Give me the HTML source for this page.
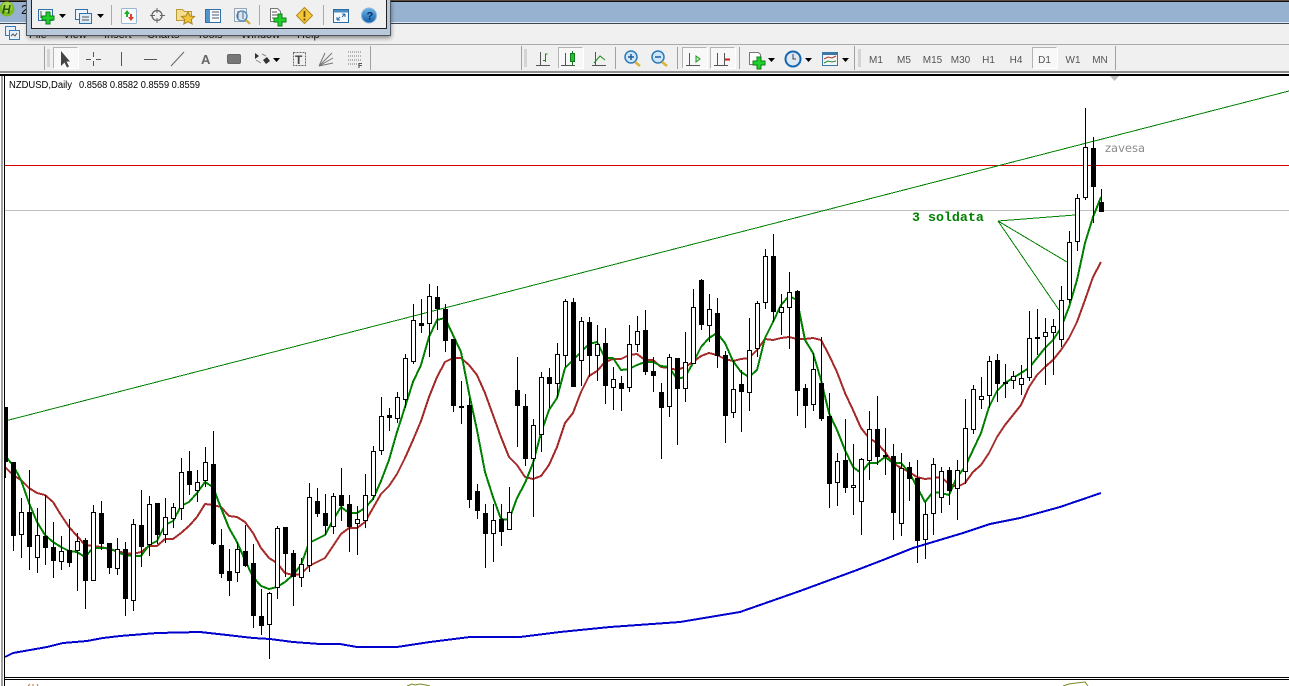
<!DOCTYPE html>
<html><head><meta charset="utf-8"><title>NZDUSD,Daily</title>
<style>
html,body{margin:0;padding:0;background:#fff;width:1289px;height:686px;overflow:hidden}
svg{position:absolute;left:0;top:0;display:block}
text{font-family:"Liberation Sans",sans-serif}
.btn{fill:#f8f8f8;shape-rendering:crispEdges}
.bl{fill:none;stroke:#b4b4b4;shape-rendering:crispEdges}
.br{fill:none;stroke:#fff;shape-rendering:crispEdges}
</style></head><body>
<svg width="1289" height="686" viewBox="0 0 1289 686" xmlns="http://www.w3.org/2000/svg">
<defs>
<clipPath id="ch"><rect x="5" y="76" width="1284" height="601"/></clipPath>
<filter id="sh" x="-5%" y="-20%" width="110%" height="150%"><feGaussianBlur stdDeviation="2.5"/></filter>
<linearGradient id="gb" x1="0" y1="0" x2="0" y2="1"><stop offset="0" stop-color="#6fb6ea"/><stop offset="1" stop-color="#0f5ea8"/></linearGradient>
</defs>

<!-- window chrome -->
<rect width="1289" height="1" fill="#5a4c3e"/><rect y="1" width="1289" height="1" fill="#111"/>
<rect y="2" width="1289" height="20" fill="#96b2d0"/>
<rect y="22" width="1289" height="1" fill="#dfe9f3"/><rect y="23" width="1289" height="1" fill="#3c4650"/>
<rect y="24" width="1289" height="20" fill="#f0f0f0"/>
<rect y="44" width="1289" height="1" fill="#a9a9a9"/>
<rect y="45" width="1289" height="26" fill="#f0f0f0"/>
<rect y="71" width="1289" height="2" fill="#8e8e8e"/><rect y="73" width="1289" height="1" fill="#fff"/>
<rect y="74" width="1289" height="2" fill="#000"/>

<!-- logo -->
<circle cx="7" cy="9" r="7.500" fill="#7cbb24"/><circle cx="7" cy="7" r="5" fill="#a8d84a"/>
<text x="2" y="13.500" font-size="12" font-weight="bold" font-style="italic" fill="#23520a">H</text>
<text x="21" y="14" font-size="13" fill="#111">2</text>

<!-- menu -->
<g stroke="#3a78b8" fill="#e6f0fa"><rect x="5.500" y="26.500" width="10" height="9"/><rect x="9.500" y="30.500" width="10" height="9"/></g>
<path d="M11 36l2-2 2 2 2-3" stroke="#555" fill="none"/>
<g font-size="11" fill="#222">
<text x="29" y="38">File</text><text x="63" y="38">View</text><text x="104" y="38">Insert</text><text x="147" y="38">Charts</text><text x="197" y="38">Tools</text><text x="241" y="38">Window</text><text x="297" y="38">Help</text>
</g>

<!-- line studies toolbar -->
<rect x="44" y="46" width="1" height="24" fill="#a0a0a0"/>
<path d="M47 50h3M47 52h3M47 54h3M47 56h3M47 58h3M47 60h3M47 62h3M47 64h3M47 66h3" stroke="#b8b8b8"/>
<rect class="btn" x="53" y="47" width="25" height="22"/><path class="bl" d="M53.500 68.500V47.500H77.500"/><path class="br" d="M78.500 47.500V68.500H53.500"/>
<path d="M61 51v15l3.500-3.500 2.500 5 2-1-2.500-5H70z" fill="#444"/>
<path d="M93.500 52v5M93.500 61v5M86 59.500h5M96 59.500h5" stroke="#555" fill="none"/>
<path d="M121.500 52v14" stroke="#555"/>
<path d="M144 59.500h13" stroke="#555"/>
<path d="M171 66l13-14" stroke="#666"/>
<text x="201" y="64" font-size="13" font-weight="bold" fill="#666">A</text>
<rect x="227.500" y="54.500" width="13" height="9" rx="1.500" fill="#777" stroke="#666"/>
<path d="M255 53l4 3-4 3zM263 60l4-3 3 4-4 3z" fill="#333"/><path d="M256 60l5 3M262 54l4 2" stroke="#888"/>
<path d="M273 58h7l-3.500 4z" fill="#000"/>
<rect x="293.500" y="52.500" width="12" height="13" fill="none" stroke="#666" stroke-dasharray="2 1"/>
<text x="295" y="64" font-size="12" font-weight="bold" fill="#444">T</text>
<path d="M319 66l13-13M319 66l14-8M319 66l14-3M319 66l6-13" stroke="#777" fill="none"/>
<path d="M348 52h14M348 56h14M348 60h14M348 64h9" stroke="#777" stroke-dasharray="1 1"/>
<text x="358" y="68" font-size="7" font-weight="bold" fill="#444">F</text>
<rect x="370" y="46" width="1" height="24" fill="#a0a0a0"/>

<!-- chart toolbar -->
<rect x="521" y="46" width="1" height="24" fill="#a0a0a0"/>
<path d="M524 50h3M524 52h3M524 54h3M524 56h3M524 58h3M524 60h3M524 62h3M524 64h3M524 66h3" stroke="#b8b8b8"/>
<path d="M540.500 52v14M536 65.500h14" stroke="#555" fill="none"/><path d="M545.500 62v-8h2M543 60.500h2" stroke="#1a8a1a" fill="none"/>
<rect class="btn" x="558" y="47" width="25" height="22"/><path class="bl" d="M558.500 68.500V47.500H582.500"/><path class="br" d="M583.500 47.500V68.500H558.500"/>
<path d="M565.500 53v12M561 65.500h14" stroke="#555" fill="none"/><rect x="570.500" y="53.500" width="4" height="8" fill="#22c234" stroke="#127a1a"/><path d="M572.500 51v14" stroke="#127a1a"/><rect x="571" y="54" width="3" height="7" fill="#22c234"/>
<path d="M595.500 52v14M592 65.500h14" stroke="#555" fill="none"/><path d="M594 63l6-7 5 4" stroke="#1a8a1a" fill="none"/>
<rect x="615" y="47" width="1" height="22" fill="#a0a0a0"/>
<circle cx="631" cy="57" r="6" fill="#cfe6f8" stroke="#2a7ab8" stroke-width="1.500"/><path d="M628 57h6M631 54v6" stroke="#1c5f9a" stroke-width="1.500"/><path d="M635 62l5 4" stroke="#d8b43a" stroke-width="2.500"/>
<circle cx="658" cy="57" r="6" fill="#cfe6f8" stroke="#2a7ab8" stroke-width="1.500"/><path d="M655 57h6" stroke="#1c5f9a" stroke-width="1.500"/><path d="M662 62l5 4" stroke="#d8b43a" stroke-width="2.500"/>
<rect x="677" y="47" width="1" height="22" fill="#a0a0a0"/>
<rect class="btn" x="682" y="47" width="25" height="22"/><path class="bl" d="M682.500 68.500V47.500H706.500"/><path class="br" d="M707.500 47.500V68.500H682.500"/>
<path d="M689.500 53v12M686 65.500h14" stroke="#555" fill="none"/><path d="M696 56l4 3-4 3z" fill="#c8f0c8" stroke="#1a9a1a"/>
<rect class="btn" x="710" y="47" width="25" height="22"/><path class="bl" d="M710.500 68.500V47.500H734.500"/><path class="br" d="M735.500 47.500V68.500H710.500"/>
<path d="M717.500 53v12M714 65.500h14M724.500 53v12" stroke="#555" fill="none"/><path d="M725 59.500h5" stroke="#d02010" stroke-width="2"/>
<rect x="739" y="47" width="1" height="22" fill="#a0a0a0"/>
<path d="M749.500 52.500h9l2 2v10h-11z" fill="#fff" stroke="#777"/><path d="M757 57h4v4h4v4h-4v4h-4v-4h-4v-4h4z" fill="#1dd02a" stroke="#0f7d16"/>
<path d="M768 58h7l-3.500 4z" fill="#000"/>
<circle cx="793" cy="59" r="7.500" fill="#dde8f2" stroke="#1466b0" stroke-width="2"/><path d="M793 54v5h3" stroke="#444" fill="none"/>
<path d="M805 58h7l-3.500 4z" fill="#000"/>
<rect x="822.500" y="52.500" width="15" height="13" fill="#f4f6fa" stroke="#3a78a8"/><rect x="822" y="52" width="16" height="3" fill="#3a78a8"/><path d="M824 59l4-2 4 1 4-2" stroke="#b03a20" fill="none"/><path d="M824 63l4-2 4 1 4-1" stroke="#2a8a2a" fill="none"/>
<path d="M842 58h7l-3.500 4z" fill="#000"/>
<rect x="854" y="46" width="1" height="24" fill="#a0a0a0"/>
<path d="M858 50h3M858 52h3M858 54h3M858 56h3M858 58h3M858 60h3M858 62h3M858 64h3M858 66h3" stroke="#b8b8b8"/>
<rect class="btn" x="1032" y="47" width="25" height="22"/><path class="bl" d="M1032.500 68.500V47.500H1056.500"/><path class="br" d="M1057.500 47.500V68.500H1032.500"/>
<g font-size="10" fill="#555" text-anchor="middle">
<text x="876" y="63">M1</text><text x="904" y="63">M5</text><text x="932.500" y="63">M15</text><text x="960.500" y="63">M30</text><text x="988.500" y="63">H1</text><text x="1016" y="63">H4</text><text x="1044.500" y="63">D1</text><text x="1073" y="63">W1</text><text x="1100" y="63">MN</text>
</g>
<rect x="1115" y="46" width="1" height="24" fill="#a0a0a0"/>

<!-- chart frame -->
<rect x="0" y="76" width="5" height="610" fill="#fff"/>
<rect x="1" y="76" width="2" height="610" fill="#a0a0a0"/>
<rect x="4" y="74" width="1" height="606" fill="#000"/>
<path d="M1110 76h9l-4.500 5z" fill="#bdbdbd"/>

<g clip-path="url(#ch)">
<!-- horizontal and trend lines -->
<g shape-rendering="crispEdges">
<rect x="5" y="165" width="1284" height="1" fill="#dd0000"/>
<rect x="5" y="210" width="1284" height="1" fill="#c0c0c0"/>
<path d="M5 421L1289 91" stroke="#008000" fill="none" stroke-width="1"/>
<path d="M998 221L1075 215M998 221L1067 262M998 221L1059 310" stroke="#008000" fill="none" stroke-width="1"/>
<!-- moving averages -->
<polyline fill="none" stroke="#0000cd" stroke-width="2" stroke-linejoin="round" points="5,657 13,653 30,650 47,647 63,643 87,641 103,638 120,636 157,633 200,632 227,635 253,638 270,639 293,642 320,644 340,644 357,647 397,647 430,642 470,637 520,637 560,632 610,627 680,622 740,612 760,605 800,591 857,570 883,560 913,548 933,542 963,533 990,524 1000,522 1020,518 1060,507 1101,493"/>
<polyline fill="none" stroke="#a52a2a" stroke-width="2" stroke-linejoin="round" points="5,467 13,475 21,480 29,488 37,493 45,495 53,502 61,515 69,527 77,536 85,545 93,546 101,547 109,549 117,551 125,553 133,554 141,552 149,546 157,546 165,539 173,539 181,533 189,526 197,517 205,504 213,505 221,507 229,516 237,517 245,522 253,533 261,548 269,558 277,563 285,573 293,575 301,574 309,566 317,562 325,558 333,546 341,534 349,528 357,528 365,522 373,508 381,494 389,486 397,474 405,458 413,440 421,421 429,397 437,377 445,362 453,358 461,358 469,365 477,375 485,393 493,415 501,437 509,457 517,465 525,477 533,479 541,476 549,465 557,447 565,423 573,413 581,392 589,376 597,371 605,362 613,359 621,359 629,355 637,354 645,360 653,360 661,367 669,368 677,370 685,367 693,362 701,356 709,353 717,355 725,359 733,361 741,359 749,358 757,350 765,339 773,340 781,338 789,337 797,339 805,339 813,338 821,340 829,355 837,372 845,393 853,410 861,428 869,438 877,443 885,452 893,463 901,468 909,472 917,477 925,479 933,478 941,477 949,484 957,487 965,483 973,472 981,465 989,453 997,437 1005,425 1013,415 1021,405 1029,387 1037,375 1045,367 1053,360 1061,350 1069,338 1077,322 1085,300 1093,277 1101,262"/>
<polyline fill="none" stroke="#008000" stroke-width="2" stroke-linejoin="round" points="5,456 13,465 21,480 29,503 37,522 45,535 53,542 61,547 69,551 77,552 85,557 93,548 101,548 109,548 117,552 125,555 133,556 141,556 149,545 157,541 165,525 173,521 181,506 189,502 197,493 205,482 213,487 221,508 229,528 237,542 245,560 253,577 261,586 269,589 277,587 285,582 293,575 301,565 309,543 317,539 325,535 333,520 341,507 349,513 357,513 365,508 373,499 381,481 389,460 397,432 405,407 413,382 421,365 429,337 437,320 445,318 453,335 461,352 469,393 477,430 485,472 493,497 501,519 509,520 517,498 525,483 533,463 541,433 549,410 557,398 565,368 573,360 581,352 589,344 597,342 605,358 613,358 621,370 629,369 637,365 645,362 653,362 661,366 669,367 677,379 685,377 693,363 701,347 709,338 717,333 725,343 733,361 741,372 749,377 757,370 765,338 773,322 781,305 789,296 797,300 805,340 813,353 821,380 829,413 837,430 845,450 853,467 861,473 869,463 877,463 885,457 893,463 901,463 909,472 917,487 925,502 933,492 941,493 949,495 957,477 965,467 973,450 981,433 989,407 997,391 1005,383 1013,378 1021,373 1029,368 1037,358 1045,348 1053,340 1061,328 1069,307 1077,280 1085,243 1093,217 1101,197"/>
</g>
<!-- wicks -->
<path shape-rendering="crispEdges" stroke="#000" fill="none" d="M5.500 407V478M13.500 462V551M21.500 498V558M29.500 470V570M37.500 508V573M45.500 495V565M53.500 522V578M61.500 536V570M69.500 519V567M77.500 533V591M85.500 538V609M93.500 505V581M101.500 501V550M109.500 543V574M117.500 538V575M125.500 542V616M133.500 519V611M141.500 490V567M149.500 496V556M157.500 503V544M165.500 498V543M173.500 503V528M181.500 458V520M189.500 451V495M197.500 470V502M205.500 447V487M213.500 431V545M221.500 529V578M229.500 549V596M237.500 542V582M245.500 525V567M253.500 544V628M261.500 589V635M269.500 592V659M277.500 526V599M285.500 527V577M293.500 550V606M301.500 558V587M309.500 483V572M317.500 488V517M325.500 494V535M333.500 493V534M341.500 468V521M349.500 495V552M357.500 506V555M365.500 474V528M373.500 446V500M381.500 397V455M389.500 408V431M397.500 392V423M405.500 354V408M413.500 304V364M421.500 299V333M429.500 284V357M437.500 286V330M445.500 304V352M453.500 339V412M461.500 381V424M469.500 398V508M477.500 484V519M485.500 504V568M493.500 504V562M501.500 504V546M509.500 487V530M517.500 357V447M525.500 394V466M533.500 419V517M541.500 372V452M549.500 368V408M557.500 343V398M565.500 299V367M573.500 298V387M581.500 317V386M589.500 317V377M597.500 325V381M605.500 328V404M613.500 367V410M621.500 376V411M629.500 325V392M637.500 316V352M645.500 310V375M653.500 357V392M661.500 383V459M669.500 354V417M677.500 358V445M685.500 332V402M693.500 289V364M701.500 279V330M709.500 294V342M717.500 298V368M725.500 351V443M733.500 360V418M741.500 370V432M749.500 318V411M757.500 301V357M765.500 249V309M773.500 234V322M781.500 294V335M789.500 272V349M797.500 290V416M805.500 384V428M813.500 353V411M821.500 337V421M829.500 393V508M837.500 453V506M845.500 419V493M853.500 444V515M861.500 458V535M869.500 411V480M877.500 396V465M885.500 428V475M893.500 444V540M901.500 453V536M909.500 462V501M917.500 460V563M925.500 502V559M933.500 458V535M941.500 467V513M949.500 467V505M957.500 460V520M965.500 399V484M973.500 385V434M981.500 377V409M989.500 356V408M997.500 354V402M1005.500 364V398M1013.500 371V389M1021.500 365V395M1029.500 311V381M1037.500 309V355M1045.500 318V385M1053.500 319V375M1061.500 286V347M1069.500 231V303M1077.500 194V251M1085.500 108V200M1093.500 137V223M1101.500 189V211"/>
<!-- black bodies -->
<path shape-rendering="crispEdges" fill="#000" d="M3 407h5V462h-5zM11 462h5V536h-5zM27 512h5V547h-5zM43 536h5V548h-5zM51 547h5V561h-5zM67 550h5V563h-5zM83 540h5V581h-5zM99 513h5V544h-5zM107 543h5V568h-5zM123 549h5V599h-5zM139 525h5V547h-5zM155 503h5V535h-5zM187 471h5V485h-5zM211 464h5V544h-5zM219 545h5V574h-5zM227 571h5V581h-5zM243 551h5V566h-5zM251 563h5V616h-5zM259 616h5V626h-5zM283 527h5V554h-5zM291 553h5V577h-5zM315 501h5V514h-5zM323 513h5V526h-5zM339 495h5V506h-5zM347 504h5V527h-5zM387 415h5V418h-5zM419 323h5V326h-5zM435 297h5V309h-5zM443 309h5V341h-5zM451 339h5V406h-5zM459 406h5V408h-5zM467 405h5V500h-5zM475 491h5V511h-5zM483 513h5V534h-5zM499 519h5V532h-5zM515 390h5V406h-5zM523 406h5V459h-5zM547 377h5V384h-5zM571 302h5V387h-5zM587 322h5V356h-5zM603 343h5V386h-5zM619 383h5V389h-5zM643 330h5V372h-5zM651 371h5V376h-5zM659 392h5V408h-5zM675 358h5V389h-5zM699 280h5V325h-5zM715 313h5V356h-5zM723 355h5V416h-5zM739 384h5V392h-5zM771 256h5V312h-5zM795 291h5V391h-5zM803 388h5V406h-5zM819 383h5V419h-5zM827 416h5V484h-5zM843 460h5V488h-5zM875 429h5V457h-5zM883 455h5V457h-5zM891 456h5V513h-5zM907 467h5V479h-5zM915 478h5V541h-5zM947 470h5V491h-5zM995 360h5V384h-5zM1003 382h5V384h-5zM1035 337h5V339h-5zM1091 148h5V187h-5zM1099 202h5V212h-5z"/>
<!-- white bodies -->
<path shape-rendering="crispEdges" fill="#fff" stroke="#000" d="M19.500 512.500h4V534.500h-4zM35.500 535.500h4V557.500h-4zM59.500 551.500h4V561.500h-4zM75.500 541.500h4V550.500h-4zM91.500 512.500h4V580.500h-4zM115.500 549.500h4V568.500h-4zM131.500 524.500h4V600.500h-4zM147.500 504.500h4V544.500h-4zM163.500 517.500h4V534.500h-4zM171.500 507.500h4V518.500h-4zM179.500 472.500h4V508.500h-4zM195.500 482.500h4V490.500h-4zM203.500 462.500h4V480.500h-4zM235.500 549.500h4V572.500h-4zM267.500 593.500h4V624.500h-4zM275.500 528.500h4V587.500h-4zM299.500 564.500h4V577.500h-4zM307.500 497.500h4V565.500h-4zM331.500 496.500h4V526.500h-4zM355.500 519.500h4V523.500h-4zM363.500 495.500h4V520.500h-4zM371.500 451.500h4V495.500h-4zM379.500 416.500h4V450.500h-4zM395.500 397.500h4V418.500h-4zM403.500 358.500h4V399.500h-4zM411.500 320.500h4V361.500h-4zM427.500 296.500h4V323.500h-4zM491.500 520.500h4V533.500h-4zM507.500 512.500h4V529.500h-4zM531.500 425.500h4V458.500h-4zM539.500 377.500h4V434.500h-4zM555.500 354.500h4V383.500h-4zM563.500 301.500h4V355.500h-4zM579.500 321.500h4V360.500h-4zM595.500 344.500h4V355.500h-4zM611.500 379.500h4V387.500h-4zM627.500 344.500h4V387.500h-4zM635.500 331.500h4V344.500h-4zM667.500 357.500h4V406.500h-4zM683.500 362.500h4V388.500h-4zM691.500 307.500h4V363.500h-4zM707.500 309.500h4V325.500h-4zM731.500 389.500h4V412.500h-4zM747.500 350.500h4V392.500h-4zM755.500 303.500h4V348.500h-4zM763.500 256.500h4V302.500h-4zM779.500 307.500h4V312.500h-4zM787.500 292.500h4V307.500h-4zM811.500 369.500h4V404.500h-4zM835.500 461.500h4V482.500h-4zM851.500 485.500h4V487.500h-4zM859.500 459.500h4V501.500h-4zM867.500 429.500h4V460.500h-4zM899.500 468.500h4V523.500h-4zM923.500 514.500h4V539.500h-4zM931.500 464.500h4V513.500h-4zM939.500 471.500h4V497.500h-4zM955.500 470.500h4V488.500h-4zM963.500 428.500h4V471.500h-4zM971.500 389.500h4V429.500h-4zM979.500 396.500h4V399.500h-4zM987.500 361.500h4V395.500h-4zM1011.500 376.500h4V380.500h-4zM1019.500 378.500h4V384.500h-4zM1027.500 338.500h4V377.500h-4zM1043.500 332.500h4V336.500h-4zM1051.500 326.500h4V332.500h-4zM1059.500 300.500h4V339.500h-4zM1067.500 242.500h4V299.500h-4zM1075.500 198.500h4V241.500h-4zM1083.500 147.500h4V197.500h-4z"/>
<!-- labels -->
<text x="9" y="88" font-size="10" fill="#000" textLength="63" lengthAdjust="spacingAndGlyphs">NZDUSD,Daily</text>
<text x="79" y="88" font-size="10" fill="#000" textLength="121" lengthAdjust="spacingAndGlyphs">0.8568 0.8582 0.8559 0.8559</text>
<text x="912" y="221" style="font-family:'Liberation Mono',monospace" font-size="13.300" font-weight="bold" fill="#008000">3 soldata</text>
<text x="1105" y="152" style="font-family:'DejaVu Sans',sans-serif" font-size="11.500" fill="#8c8c8c" textLength="40" lengthAdjust="spacing">zavesa</text>
</g>

<!-- bottom -->
<rect x="4" y="677" width="1285" height="1" fill="#000"/><rect x="4" y="679" width="1285" height="1" fill="#000"/>
<rect x="4" y="680" width="1" height="6" fill="#000"/>
<path d="M28 686l2-2M33 686v-2M38 686l-1-2" stroke="#b07a3a" fill="none"/>
<path d="M407 686l5-2 3 1 5-1 6 1 4 1" stroke="#7a8a20" fill="none"/>
<path d="M1063 686l6-2 7-1 9-1 3 4" stroke="#7a8a20" fill="none"/>

<!-- floating toolbar -->
<rect x="28" y="2" width="363" height="36" fill="#000" opacity=".45" filter="url(#sh)"/>
<rect x="26.500" y="-2" width="364" height="37.500" fill="#b7c9db" stroke="#4d5660"/>
<rect x="31.500" y="-2" width="355" height="30.500" fill="#f0f0f0" stroke="#222"/>
<!-- new chart -->
<rect x="38.500" y="9.500" width="14" height="11" fill="#eef5fb" stroke="#2f72ab"/><path d="M41 11v7M41 17h8" stroke="#555"/>
<path d="M46 12h4v4h4v4h-4v4h-4v-4h-4v-4h4z" fill="#1dd02a" stroke="#0f7d16"/>
<path d="M59 14h7l-3.500 4z" fill="#000"/>
<!-- profiles -->
<rect x="75.500" y="9.500" width="12" height="10" fill="#eef5fb" stroke="#2f72ab"/><rect x="79.500" y="13.500" width="12" height="10" fill="#dcebf8" stroke="#2f72ab"/><path d="M82 17h7M82 20h7" stroke="#555"/>
<path d="M97 14h7l-3.500 4z" fill="#000"/>
<rect x="111" y="5" width="1" height="20" fill="#aaa"/>
<!-- market watch -->
<rect x="121.500" y="8.500" width="15" height="15" rx="1" fill="#f8fbfe" stroke="#9ab8d4"/><path d="M127 10l-3 4h2v3h2v-3h2z" fill="#1eae2a"/><path d="M131 21l3-4h-2v-3h-2v3h-2z" fill="#d8402a"/>
<!-- crosshair -->
<circle cx="157" cy="15.500" r="5" fill="none" stroke="#666" stroke-width="1.300"/><path d="M157 8v5M157 18v5M150 15.500h5M160 15.500h5" stroke="#666"/>
<!-- folder star -->
<path d="M176.500 9.500h6l2 2h7v9h-15z" fill="#f5dd8f" stroke="#b79a3c"/><path d="M188 12l2 4 4.500.500-3.300 3 1 4.500-4.200-2.300-4.200 2.300 1-4.500-3.300-3 4.500-.500z" fill="#f3c53a" stroke="#a88620"/>
<!-- navigator -->
<rect x="205.500" y="9.500" width="15" height="13" fill="#f8fbfe" stroke="#2f72ab"/><rect x="206" y="10" width="4" height="12" fill="#4e95cf"/><path d="M212 12h7M212 15h7M212 18h7" stroke="#556"/>
<!-- tester -->
<rect x="234.500" y="8.500" width="12" height="13" fill="#eef2f6" stroke="#97a7b6"/><circle cx="242" cy="16" r="5" fill="#d5e7f5" stroke="#4a84b6" stroke-width="1.300"/><path d="M246 20l4 4" stroke="#d2ac34" stroke-width="2.200"/><path d="M238 11v7M243 12v7" stroke="#667"/>
<rect x="259" y="5" width="1" height="20" fill="#aaa"/>
<!-- doc plus -->
<path d="M270.500 8.500h7l3 3v10h-10z" fill="#fff" stroke="#777"/><path d="M272 12h5M272 15h6M272 18h4" stroke="#555"/><path d="M278 14h4v4h4v4h-4v4h-4v-4h-4v-4h4z" fill="#1dd02a" stroke="#0f7d16"/>
<!-- warning -->
<path d="M304.500 7.500l8 8-8 8-8-8z" fill="#f5c83a" stroke="#b08a1c"/><path d="M304.500 11v6M304.500 18.500v2" stroke="#6b4a00" stroke-width="1.800"/>
<rect x="323" y="5" width="1" height="20" fill="#aaa"/>
<!-- fullscreen -->
<rect x="333.500" y="9.500" width="15" height="13" fill="#f8fbfe" stroke="#2a6ca6"/><rect x="334" y="10" width="14" height="2.500" fill="#4a8cc4"/><path d="M337 20l3-3M337 20v-3M337 20h3M345 14l-3 3M345 14v3M345 14h-3" stroke="#2a6ca6" fill="none"/>
<!-- help -->
<circle cx="369" cy="15.500" r="7.500" fill="url(#gb)" stroke="#8eb8da"/><text x="366.500" y="19.500" font-size="11" font-weight="bold" fill="#0b2f60">?</text>
</svg>
</body></html>
